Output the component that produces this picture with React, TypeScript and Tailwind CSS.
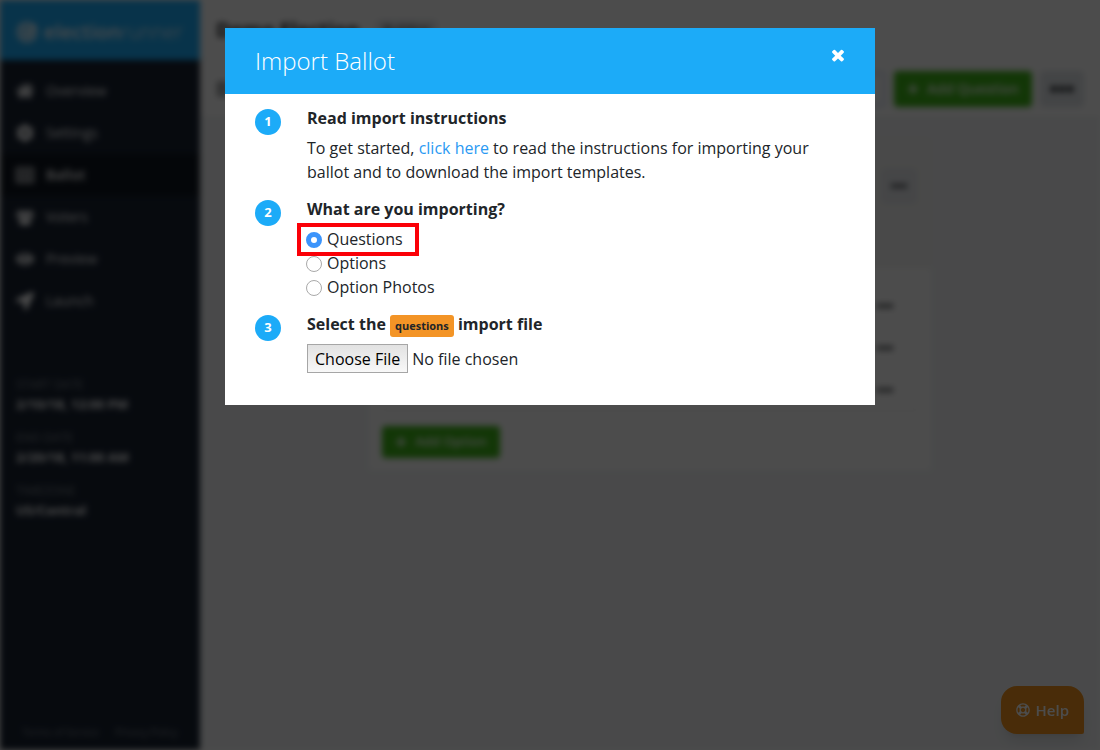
import { useState } from "react";
import type { ReactNode } from "react";
import {
  FaCog,
  FaEllipsisH,
  FaEye,
  FaHome,
  FaLocationArrow,
  FaPlus,
  FaRegLifeRing,
  FaRegListAlt,
} from "react-icons/fa";

function VotersIcon({ className }: { className?: string }) {
  return (
    <svg viewBox="0 0 20 18" className={className} fill="currentColor">
      <circle cx="4" cy="4" r="2.6" />
      <circle cx="16" cy="4" r="2.6" />
      <circle cx="10" cy="6" r="3.8" />
      <path d="M0 7.5C0 6.500 1 6 2 6.500c1 .700 3 .700 3.800.500C5.800 8.500 6 9 6.500 9.700H2C.800 9.700 0 9 0 7.500ZM20 7.500c0-1-1-1.500-2-1-1 .700-3 .700-3.800.500 0 1.500-.2 2-.7 2.700H18c1.200 0 2-.7 2-2.200ZM3.500 15c0-3 .8-5.300 3-5.300C7.500 10.800 8.700 11.300 10 11.300s2.500-.5 3.500-1.600c2.200 0 3 2.300 3 5.300 0 1.900-1.200 3-3 3h-7c-1.800 0-3-1.100-3-3Z" />
    </svg>
  );
}

function LogoIcon({ className }: { className?: string }) {
  return (
    <svg viewBox="0 0 22 22" className={className} fill="none" stroke="currentColor">
      <circle cx="11" cy="11" r="9" strokeWidth="2.500" />
      <path d="M7 7h8v8H7Z" strokeWidth="2" />
      <path d="m9 10 3 3 8-9" strokeWidth="2" />
    </svg>
  );
}

const navItems = [
  { label: "Overview", icon: FaHome },
  { label: "Settings", icon: FaCog },
  { label: "Ballot", icon: FaRegListAlt, active: true },
  { label: "Voters", icon: VotersIcon },
  { label: "Preview", icon: FaEye },
  { label: "Launch", icon: FaLocationArrow },
];

const details = [
  { label: "START DATE", value: "2/10/18, 12:00 PM" },
  { label: "END DATE", value: "2/20/18, 11:00 AM" },
  { label: "TIMEZONE", value: "US/Central" },
];

const importTypes = [
  { id: "questions", label: "Questions" },
  { id: "options", label: "Options" },
  { id: "photos", label: "Option Photos" },
];

function Sidebar() {
  return (
    <aside className="flex w-[200px] shrink-0 flex-col bg-[#182231] text-white">
      <div className="flex h-[60px] items-center gap-1.5 bg-[#1cabf8] px-4 pt-1">
        <LogoIcon className="size-[22px]" />
        <span className="font-['Open_Sans',sans-serif] text-[20px] leading-6">
          <span className="font-semibold">election</span>
          <span className="font-light">runner</span>
        </span>
      </div>
      <nav className="mt-2.5 flex flex-col">
        {navItems.map(({ label, icon: Icon, active }) => (
          <a
            key={label}
            href="#"
            className={
              active
                ? "flex h-[42px] items-center gap-3 bg-[#0f1620] px-4 text-sm font-semibold"
                : "flex h-[42px] items-center gap-3 px-4 text-sm"
            }
          >
            <Icon className="size-[18px]" />
            {label}
          </a>
        ))}
      </nav>
      <dl className="mt-[54px] flex flex-col gap-[15px] px-4">
        {details.map((d) => (
          <div key={d.label}>
            <dt className="text-xs leading-[18px] text-[#7f8790]">{d.label}</dt>
            <dd className="text-[13px] leading-5 font-bold text-white">{d.value}</dd>
          </div>
        ))}
      </dl>
      <div className="mt-auto flex justify-center gap-4 pb-2 text-[10px] leading-5 text-[#7f8790]">
        <a href="#">Terms of Service</a>
        <a href="#">Privacy Policy</a>
      </div>
    </aside>
  );
}

function BallotPage() {
  return (
    <main className="flex min-w-0 grow flex-col bg-[#f4f6f8]">
      <header className="flex h-[60px] items-center gap-4 border-b border-[#f0f0f0] bg-white px-4">
        <h1 className="text-xl font-bold">Demo Election</h1>
        <span className="rounded bg-[#e4e7ea] px-2 text-xs leading-5">Building</span>
      </header>
      <div className="flex h-[58px] items-center justify-end gap-2 border-b border-[#e9ebea] bg-white px-4">
        <h2 className="mr-auto text-xl">Ballot</h2>
        <input
          aria-label="Search ballot"
          className="h-9 w-40 rounded border-4 border-[#e2eaf5] bg-white"
        />
        <button className="flex h-9 w-[138px] items-center justify-center gap-2 rounded bg-[#3fb618] text-sm font-semibold text-white">
          <FaPlus className="size-3" />
          Add Question
        </button>
        <button
          aria-label="Ballot actions"
          className="flex h-9 w-11 items-center justify-center rounded bg-[#e2e6ea]"
        >
          <FaEllipsisH className="size-6" />
        </button>
      </div>
      <section className="mx-auto mt-5 w-full max-w-[562px] bg-white">
        <div className="flex h-[130px] items-start justify-end bg-[#f5f5f3] px-3.5 pt-[30px]">
          <button
            aria-label="Question actions"
            className="flex size-9 items-center justify-center rounded bg-[#e8eaee]"
          >
            <FaEllipsisH className="size-4" />
          </button>
        </div>
        <div className="px-[13px] pt-4 pb-3">
          <ul className="border border-[#f4f4f4]">
            {[1, 2, 3].map((n) => (
              <li
                key={n}
                className="flex h-[42px] items-center justify-end border-b border-[#f4f4f4] pr-6"
              >
                <FaEllipsisH className="size-4" />
              </li>
            ))}
          </ul>
          <button className="mt-3.5 flex h-8 w-[118px] items-center justify-center gap-2 rounded bg-[#3fb618] text-[13px] font-semibold text-white">
            <FaPlus className="size-3" />
            Add Option
          </button>
        </div>
      </section>
    </main>
  );
}

function Step({ number, title, children }: { number: number; title: ReactNode; children: ReactNode }) {
  return (
    <li className="flex gap-[26px]">
      <span className="mt-[3px] flex size-[26px] shrink-0 items-center justify-center rounded-full bg-[#1cabf8] text-[13px] font-bold text-white">
        {number}
      </span>
      <div className="min-w-0 grow">
        <h3 className="mb-1.5 leading-6 font-bold">{title}</h3>
        {children}
      </div>
    </li>
  );
}

function ImportDialog() {
  const [selected, setSelected] = useState("questions");
  return (
    <div
      role="dialog"
      aria-modal="true"
      aria-labelledby="import-title"
      className="mx-auto mt-7 w-full max-w-[650px] bg-white text-base text-[#212529]"
    >
      <header className="flex h-[66px] items-start justify-between bg-[#1cabf8] px-[30px] text-white">
        <h2 id="import-title" className="mt-4 text-2xl leading-[34px] font-light">
          Import Ballot
        </h2>
        <button aria-label="Close" className="mt-[18px] -mr-0.5">
          <svg viewBox="0 0 1792 1792" className="size-[18px]" fill="currentColor">
            <path d="M1490 1322q0 40-28 68l-136 136q-28 28-68 28t-68-28l-294-294-294 294q-28 28-68 28t-68-28l-136-136q-28-28-28-68t28-68l294-294-294-294q-28-28-28-68t28-68l136-136q28-28 68-28t68 28l294 294 294-294q28-28 68-28t68 28l136 136q28 28 28 68t-28 68l-294 294 294 294q28 28 28 68z" />
          </svg>
        </button>
      </header>
      <ol className="flex flex-col gap-[13px] px-[30px] pt-3 pb-8">
        <Step number={1} title="Read import instructions">
          <p className="leading-6">
            To get started,{" "}
            <a href="#" className="text-[#2b9af3]">
              click here
            </a>{" "}
            to read the instructions for importing your ballot and to download the import templates.
          </p>
        </Step>
        <Step number={2} title="What are you importing?">
          <div className="flex flex-col items-start">
            {importTypes.map(({ id, label }) => (
              <label key={id} className="relative flex h-6 items-center gap-[5px]">
                <input
                  type="radio"
                  name="import-type"
                  checked={selected === id}
                  onChange={() => setSelected(id)}
                  className="mt-0.5 -ml-px size-4 appearance-none rounded-full border border-[#a9a9a9] bg-white checked:border-[5px] checked:border-[#3b94fb]"
                />
                {label}
                {id === "questions" && (
                  <span className="pointer-events-none absolute -top-1 -right-4 -bottom-[5px] -left-2.5 border-4 border-[#fb0007]" />
                )}
              </label>
            ))}
          </div>
        </Step>
        <Step
          number={3}
          title={
            <>
              Select the{" "}
              <span className="inline-block rounded-[3px] bg-[#f39426] px-[5px] text-[11px] leading-[22px] font-bold">
                {selected}
              </span>{" "}
              import file
            </>
          }
        >
          <input
            type="file"
            aria-label="Import file"
            className="mt-[7px] block w-full file:mr-1 file:h-[29px] file:border file:border-solid file:border-[#a6a6a6] file:bg-linear-to-b file:from-[#e2e2e2] file:to-[#f8f8f8] file:px-[7px] file:text-black"
          />
        </Step>
      </ol>
    </div>
  );
}

export default function App() {
  return (
    <div className="relative min-h-screen bg-white font-['Open_Sans',sans-serif] text-[#212529]">
      <div className="flex min-h-screen blur-[3px]">
        <Sidebar />
        <BallotPage />
      </div>
      <button className="fixed right-4 bottom-4 flex h-12 items-center gap-1.5 rounded-2xl rounded-br-[2px] bg-[#f3951f] px-[15px] text-[15px] font-semibold text-white shadow-lg">
        <FaRegLifeRing className="size-3.5" />
        Help
      </button>
      <div className="fixed inset-0 bg-black/70">
        <ImportDialog />
      </div>
    </div>
  );
}
